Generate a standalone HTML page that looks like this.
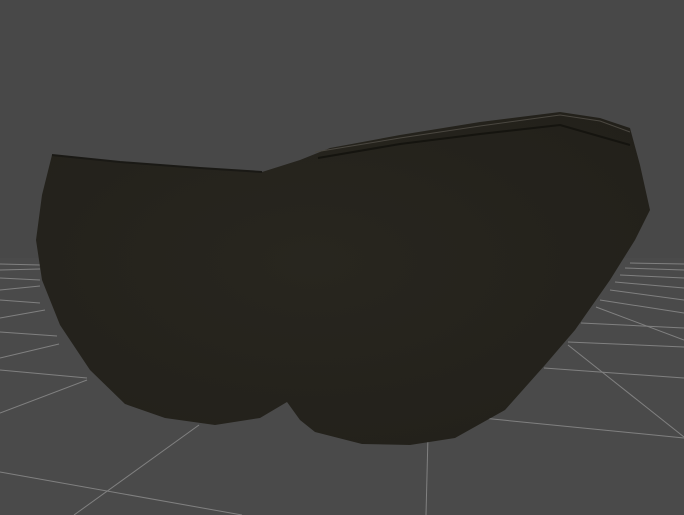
<!DOCTYPE html>
<html><head><style>
html,body{margin:0;padding:0;background:#484848;width:684px;height:515px;overflow:hidden}
svg{display:block}
</style></head><body>
<svg width="684" height="515" viewBox="0 0 684 515" xmlns="http://www.w3.org/2000/svg">
<defs>
<radialGradient id="g" cx="0.45" cy="0.45" r="0.7">
<stop offset="0" stop-color="#28261f"/>
<stop offset="1" stop-color="#22201a"/>
</radialGradient>
</defs>
<rect width="684" height="515" fill="#484848"/>
<rect y="258" width="684" height="257" fill="#4a4a4a"/>
<g stroke="#8a8a8a" stroke-width="1" fill="none" opacity="0.85">
<line x1="0" y1="472" x2="242" y2="515"/>
<line x1="0" y1="370" x2="87" y2="378"/>
<line x1="0" y1="413" x2="87" y2="380"/>
<line x1="74" y1="515" x2="199" y2="425"/>
<line x1="0" y1="358" x2="59" y2="344"/>
<line x1="0" y1="332" x2="57" y2="336"/>
<line x1="0" y1="318" x2="45" y2="310"/>
<line x1="0" y1="300" x2="40" y2="303"/>
<line x1="0" y1="290" x2="40" y2="286"/>
<line x1="0" y1="278" x2="40" y2="280"/>
<line x1="0" y1="270" x2="40" y2="269"/>
<line x1="0" y1="264" x2="40" y2="265"/>
<line x1="428" y1="435" x2="426" y2="515"/>
<line x1="472" y1="417" x2="684" y2="438"/>
<line x1="568" y1="345" x2="684" y2="437"/>
<line x1="544" y1="368" x2="684" y2="378"/>
<line x1="568" y1="342" x2="684" y2="347"/>
<line x1="581" y1="323" x2="684" y2="328"/>
<line x1="596" y1="307" x2="684" y2="340"/>
<line x1="600" y1="300" x2="684" y2="313"/>
<line x1="610" y1="290" x2="684" y2="300"/>
<line x1="615" y1="282" x2="684" y2="288"/>
<line x1="620" y1="275" x2="684" y2="278"/>
<line x1="625" y1="268" x2="684" y2="270"/>
<line x1="630" y1="263" x2="684" y2="264"/>
</g>
<path d="M52,155 L120,162 L200,168 L262,172 L300,160 L330,148 L400,135 L480,122 L560,112 L600,118 L630,128 L640,165 L650,210 L635,240 L610,280 L575,330 L545,365 L505,410 L455,438 L410,445 L362,444 L315,432 L300,420 L287,402 L260,418 L215,425 L165,418 L125,404 L90,370 L60,325 L42,280 L36,240 L42,195 Z" fill="url(#g)"/>
<path d="M52,155 L120,162 L200,168 L262,172" stroke="#1a1915" stroke-width="2" fill="none"/>
<path d="M315,152 L400,138 L480,126 L560,115 L600,121 L630,132" stroke="#4a4740" stroke-width="1" fill="none"/>
<path d="M318,158 L400,144 L480,134 L560,125 L630,145" stroke="#15140f" stroke-width="2" fill="none"/>
</svg>
</body></html>
